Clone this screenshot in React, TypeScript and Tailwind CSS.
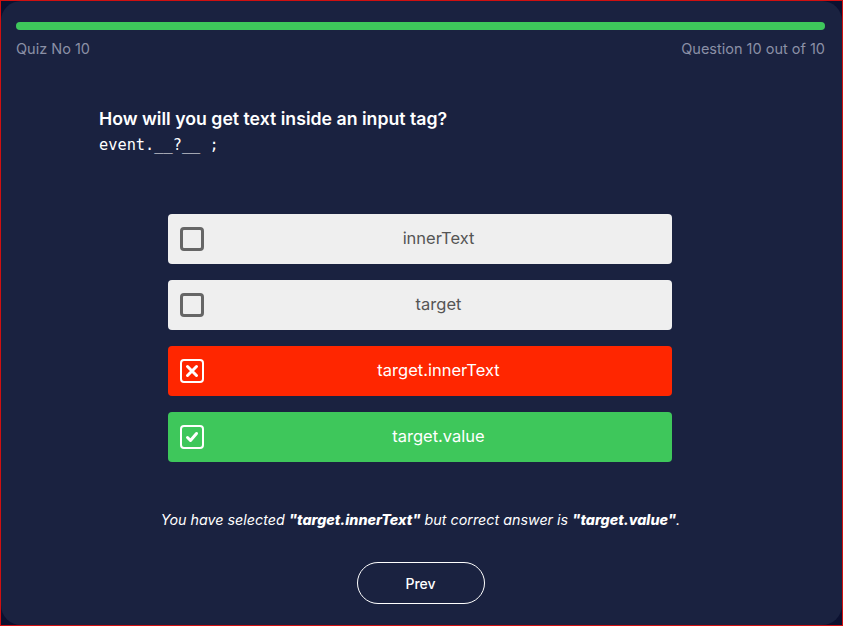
import { useState } from 'react'

type Option = { label: string; state: 'idle' | 'wrong' | 'right' }

const options: Option[] = [
  { label: 'innerText', state: 'idle' },
  { label: 'target', state: 'idle' },
  { label: 'target.innerText', state: 'wrong' },
  { label: 'target.value', state: 'right' },
]

// small checkbox drawn by hand so the stroke matches the screenshot
const Box = ({ state }: { state: Option['state'] }) => {
  if (state === 'idle')
    return <span className="w-6 h-6 shrink-0 rounded-[4px] border-[3px] border-[#666666] bg-transparent" />
  return (
    <span className="w-6 h-6 shrink-0 rounded-[4px] border-[2.5px] border-white flex items-center justify-center">
      {state === 'wrong' ? (
        <svg width="14" height="14" viewBox="0 0 14 14">
          <path d="M2.5 2.5 L11.5 11.5 M11.5 2.5 L2.5 11.5" stroke="white" strokeWidth="3" strokeLinecap="round" />
        </svg>
      ) : (
        <svg width="14" height="14" viewBox="0 0 14 14">
          <path d="M2.5 7.5 L5.5 10.5 L11.5 3.5" stroke="white" strokeWidth="3" fill="none" strokeLinecap="round" strokeLinejoin="round" />
        </svg>
      )}
    </span>
  )
}

const App = () => {
  const [current] = useState(10)
  const total = 10

  return (
    <div
      className="w-[843px] h-[626px] border border-[#d01010] bg-[#0c1130] overflow-hidden"
      style={{ fontFamily: 'Inter, "Noto Sans", sans-serif' }}
    >
      <div className="h-full rounded-[20px] bg-[#1a2240] pl-[15px] pr-[17px] pt-[21px] flex flex-col">
        {/* progress */}
        <div className="h-[8px] rounded-full bg-[#2c3453]">
          <div className="h-full rounded-full bg-[#3ec75b]" style={{ width: `${(current / total) * 100}%` }} />
        </div>
        <div className="flex justify-between mt-[8px] text-[14.5px] text-[#8b90a6]">
          <span>Quiz No {current}</span>
          <span>Question {current} out of {total}</span>
        </div>

        {/* question */}
        <div className="pl-[83px] mt-[47px]">
          <h2 className="text-[17.7px] font-semibold text-white leading-[24px]">
            How will you get text inside an input tag?
          </h2>
          <p className="text-[15.3px] text-white leading-[20px] mt-[4px]" style={{ fontFamily: '"DejaVu Sans Mono", monospace' }}>
            event.__?__ ;
          </p>
        </div>

        {/* options */}
        <div className="flex flex-col gap-4 w-[504px] mx-auto mt-[59px] -translate-x-[1px]">
          {options.map((o) => (
            <div
              key={o.label}
              className={
                'h-[50px] rounded-[4px] flex items-center px-3 ' +
                (o.state === 'idle'
                  ? 'bg-[#efefef] text-[#555555]'
                  : o.state === 'wrong'
                    ? 'bg-[#ff2600] text-white'
                    : 'bg-[#3ec75b] text-white')
              }
            >
              <Box state={o.state} />
              <span className="flex-1 text-center text-[16.5px] pl-[14px]">{o.label}</span>
            </div>
          ))}
        </div>

        <p className="text-center italic text-white text-[14.3px] mt-[47px]">
          You have selected <b className="font-extrabold">"target.innerText"</b> but correct answer is{' '}
          <b className="font-extrabold">"target.value"</b>.
        </p>

        <div className="flex justify-center mt-[32px]">
          <button className="w-[128px] h-[42px] rounded-full border border-white text-white text-[14px] font-medium">
            Prev
          </button>
        </div>
      </div>
    </div>
  )
}

export default App
